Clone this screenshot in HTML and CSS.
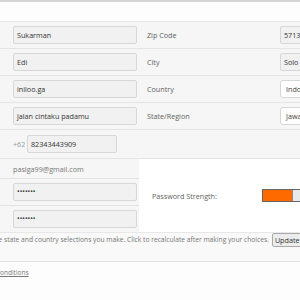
FILE: index.html
```html
<!DOCTYPE html>
<html>
<head>
<meta charset="utf-8">
<link rel="stylesheet" href="styles.css">
</head>
<body>
<div class="page">
  <div class="topbar"></div>
  <div class="row">
    <div class="cell left"><div class="input">Sukarman</div></div>
    <div class="cell right"><span class="label">Zip Code</span><div class="input rinput">57135</div></div>
  </div>
  <div class="row">
    <div class="cell left"><div class="input">Edi</div></div>
    <div class="cell right"><span class="label">City</span><div class="input rinput">Solo</div></div>
  </div>
  <div class="row">
    <div class="cell left"><div class="input">iniloo.ga</div></div>
    <div class="cell right"><span class="label">Country</span><div class="select rinput">Indonesia</div></div>
  </div>
  <div class="row">
    <div class="cell left"><div class="input">jalan cintaku padamu</div></div>
    <div class="cell right"><span class="label">State/Region</span><div class="select rinput">Jawa Tengah</div></div>
  </div>
  <div class="row tall">
    <div class="cell left"><span class="prefix">+62</span><div class="input phone">82343443909</div></div>
    <div class="cell right"></div>
  </div>
  <div class="split">
    <div class="leftcol">
      <div class="row2 email"><span class="plain">pasiga99@gmail.com</span></div>
      <div class="row2"><div class="input pw">•••••••</div></div>
      <div class="row2 last"><div class="input pw">•••••••</div></div>
    </div>
    <div class="rightcol">
      <span class="label">Password Strength:</span>
      <div class="meter"><div class="meter-fill"></div></div>
    </div>
  </div>
  <div class="note">
    <span class="note-text">Tax is calculated based on the state and country selections you make. Click to recalculate after making your choices.</span>
    <button class="btn">Update</button>
  </div>
  <div class="terms"><a href="#" class="terms-link">Conditions</a></div>
</div>
</body>
</html>
```
FILE: styles.css
```css
html, body {
  margin: 0;
  padding: 0;
}
body {
  width: 300px;
  height: 300px;
  overflow: hidden;
  background: #fdfdfd;
  font-family: "Open Sans", "DejaVu Sans", sans-serif;
  font-size: 7.2px;
  color: #555;
}
.page {
  width: 300px;
}
.topbar {
  height: 19px;
  border-top: 2px solid #d4d4d4;
  border-bottom: 1px solid #e6e6e6;
  background: #fdfdfd;
}
.row {
  display: flex;
  height: 26px;
  border-bottom: 1px solid #e4e4e4;
  background: #f6f6f6;
}
.row.tall {
  height: 28px;
}
.cell {
  display: flex;
  align-items: center;
}
.left {
  width: 139px;
  padding-left: 13px;
  box-sizing: border-box;
}
.right {
  flex: 1;
  padding-left: 8px;
  min-width: 0;
  overflow: hidden;
}
.label {
  width: 133px;
  flex: none;
  color: #5f5f5f;
  white-space: nowrap;
}
.input {
  box-sizing: border-box;
  width: 124px;
  height: 18px;
  border: 1px solid #d7d7d7;
  border-radius: 2px;
  background: #f1f1f1;
  padding-left: 3px;
  line-height: 16px;
  color: #333;
  white-space: nowrap;
  overflow: hidden;
  flex: none;
}
.select {
  box-sizing: border-box;
  height: 18px;
  border: 1px solid #d6d6d6;
  border-radius: 3px;
  background: #fff;
  padding-left: 5px;
  line-height: 16px;
  color: #444;
  white-space: nowrap;
  overflow: hidden;
  flex: none;
}
.rinput {
  width: 100px;
}
.prefix {
  width: 14px;
  color: #999;
}
.phone {
  width: 90px;
}
.split {
  display: flex;
}
.leftcol {
  width: 139px;
  background: #f6f6f6;
}
.row2 {
  display: flex;
  align-items: center;
  height: 26px;
  padding-left: 13px;
  border-bottom: 1px solid #e4e4e4;
}
.row2.email {
  height: 19px;
}
.row2.last {
  border-bottom: none;
}
.plain {
  color: #777;
}
.pw {
  font-size: 7px;
  padding-left: 3px;
}
.rightcol {
  flex: 1;
  display: flex;
  align-items: center;
  padding-left: 13px;
  background: #fff;
  min-width: 0;
  overflow: hidden;
}
.rightcol .label {
  width: 110px;
}
.meter {
  flex: none;
  width: 80px;
  height: 13px;
  box-sizing: border-box;
  border: 1px solid #666;
  background: #e9e9e9;
  display: flex;
}
.meter-fill {
  width: 29px;
  background: #ff6a00;
  border-right: 1px solid #888;
}
.note {
  display: flex;
  align-items: flex-start;
  height: 28px;
  border-top: 1px solid #e8e8e8;
  border-bottom: 1px solid #e2e2e2;
  background: #f9f9f9;
  white-space: nowrap;
  overflow: hidden;
}
.note-text {
  flex: none;
  margin-left: -91px;
  font-size: 6.7px;
  line-height: 14px;
  color: #777;
}
.btn {
  flex: none;
  margin-left: 3px;
  font-family: "Open Sans", "DejaVu Sans", sans-serif;
  font-size: 7.2px;
  height: 14px;
  padding: 0 2px;
  line-height: 12px;
  border: 1px solid #aaa;
  border-radius: 2px;
  background: #ececec;
  color: #333;
}
.terms {
  padding-top: 5px;
  white-space: nowrap;
}
.terms-link {
  display: inline-block;
  margin-left: -4px;
  font-size: 6.5px;
  color: #777;
  text-decoration: underline;
}
```
